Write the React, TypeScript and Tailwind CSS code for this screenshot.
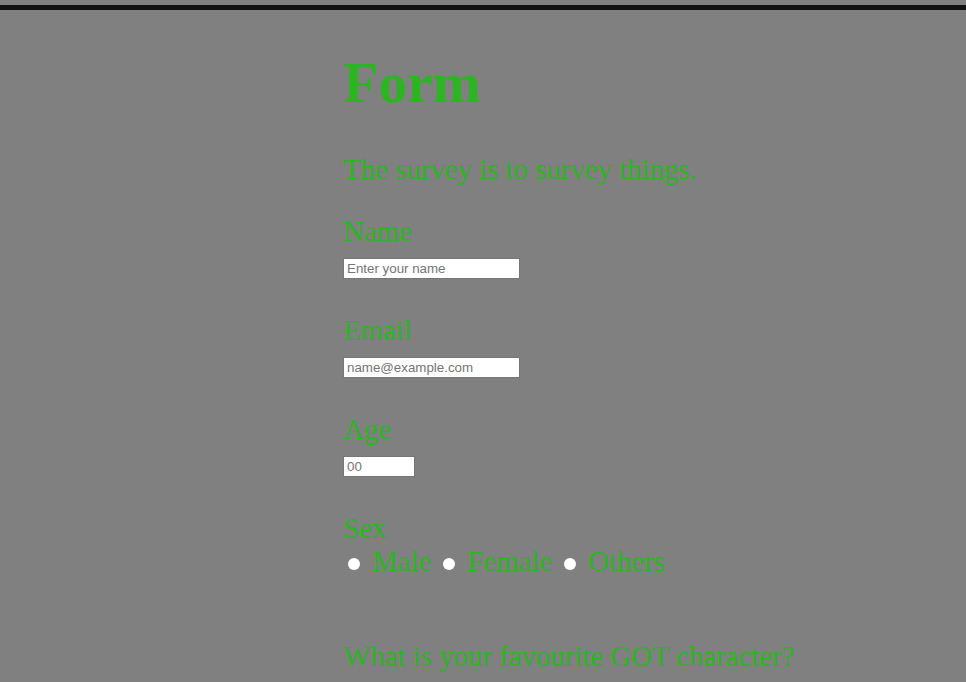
export default function App() {
  const serif = "font-['Liberation_Serif','Times_New_Roman',serif]";
  const label = `${serif} text-[28.8px] leading-[32px] text-[#2db423]`;
  const input =
    "block h-[21px] border border-[#767676] bg-white px-[3px] font-['Liberation_Sans',Arial,sans-serif] text-[13.33px] text-black placeholder:text-[#757575] outline-none";

  return (
    <div className="min-h-[682px] w-full bg-[#808080] pt-[5px]">
      {/* top rule */}
      <div className="h-[5px] w-full bg-[#111111]" />

      <form className="ml-[343px] w-[500px]">
        <h1 className={`${serif} mt-[41px] text-[57.6px] font-bold leading-[64px] text-[#2db423]`}>
          Form
        </h1>
        <p className={`${label} mt-[38px]`}>The survey is to survey things.</p>

        {/* Name */}
        <label className={`${label} mt-[30px] block`} htmlFor="name">
          Name
        </label>
        <input id="name" type="text" placeholder="Enter your name" className={`${input} mt-[11px] w-[177px]`} />

        {/* Email */}
        <label className={`${label} mt-[35px] block`} htmlFor="email">
          Email
        </label>
        <input id="email" type="email" placeholder="name@example.com" className={`${input} mt-[11px] w-[177px]`} />

        {/* Age */}
        <label className={`${label} mt-[35px] block`} htmlFor="age">
          Age
        </label>
        <input id="age" type="text" placeholder="00" className={`${input} mt-[11px] w-[72px]`} />

        {/* Sex */}
        <div className={`${label} mt-[35px]`}>Sex</div>
        <div className="mt-[1px] flex items-start">
          {['Male', 'Female', 'Others'].map((s, i) => (
            <div key={s} className={`flex items-start ${i > 0 ? 'ml-[12px]' : 'ml-[5px]'}`}>
              <span className="mt-[13px] block h-[12px] w-[12px] rounded-full bg-white" />
              <span className={`${label} ml-[12px]`}>{s}</span>
            </div>
          ))}
        </div>

        <p className={`${label} mt-[63px]`}>What is your favourite GOT character?</p>
      </form>
    </div>
  );
}
